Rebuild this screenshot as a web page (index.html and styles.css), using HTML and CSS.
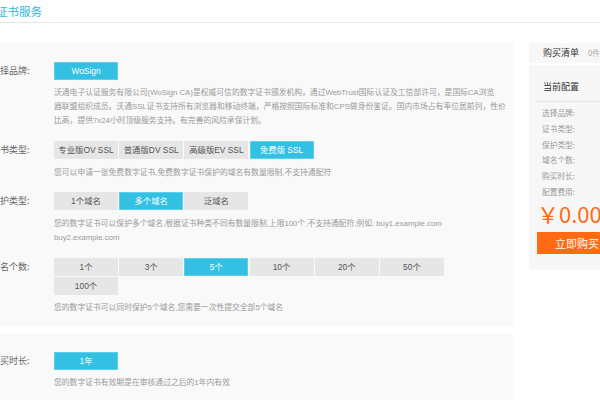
FILE: index.html
```html
<!DOCTYPE html>
<html lang="zh-CN">
<head>
<meta charset="utf-8">
<title>证书服务</title>
<link rel="stylesheet" href="styles.css">
</head>
<body>
<div class="page">
  <header class="top"><h1 class="title">证书服务</h1></header>
  <div class="main">
    <div class="content">
      <section class="panel">
        <div class="row">
          <div class="label">选择品牌:</div>
          <div class="field">
            <div class="opts"><span class="opt on">WoSign</span></div>
            <p class="desc">沃通电子认证服务有限公司(WoSign CA)是权威可信的数字证书颁发机构，通过WebTrust国际认证及工信部许可，是国际CA浏览<br>器联盟组织成员。沃通SSL证书支持所有浏览器和移动终端，严格按照国际标准和CPS做身份鉴证。国内市场占有率位居前列，性价<br>比高，提供7x24小时顶级服务支持。有完善的风险承保计划。</p>
          </div>
        </div>
        <div class="row">
          <div class="label">证书类型:</div>
          <div class="field">
            <div class="opts">
              <span class="opt">专业版OV SSL</span>
              <span class="opt">普通版DV SSL</span>
              <span class="opt">高级版EV SSL</span>
              <span class="opt on">免费版 SSL</span>
            </div>
            <p class="desc">您可以申请一张免费数字证书,免费数字证书保护的域名有数量限制,不支持通配符</p>
          </div>
        </div>
        <div class="row">
          <div class="label">保护类型:</div>
          <div class="field">
            <div class="opts">
              <span class="opt">1个域名</span>
              <span class="opt on">多个域名</span>
              <span class="opt">泛域名</span>
            </div>
            <p class="desc">您的数字证书可以保护多个域名,根据证书种类不同有数量限制,上限100个,不支持通配符,例如: buy1.example.com<br>buy2.example.com</p>
          </div>
        </div>
        <div class="row last">
          <div class="label">域名个数:</div>
          <div class="field">
            <div class="opts">
              <span class="opt">1个</span>
              <span class="opt">3个</span>
              <span class="opt on">5个</span>
              <span class="opt">10个</span>
              <span class="opt">20个</span>
              <span class="opt">50个</span>
              <span class="opt">100个</span>
            </div>
            <p class="desc">您的数字证书可以同时保护5个域名,您需要一次性提交全部5个域名</p>
          </div>
        </div>
      </section>
      <section class="panel tall">
        <div class="row">
          <div class="label">购买时长:</div>
          <div class="field">
            <div class="opts"><span class="opt on">1年</span></div>
            <p class="desc">您的数字证书有效期是在审核通过之后的1年内有效</p>
          </div>
        </div>
      </section>
    </div>
    <aside class="side">
      <div class="cart">购买清单<span class="count">0件</span></div>
      <div class="conf">
        <div class="conf-head">当前配置</div>
        <ul class="items">
          <li>选择品牌:</li>
          <li>证书类型:</li>
          <li>保护类型:</li>
          <li>域名个数:</li>
          <li>购买时长:</li>
          <li>配置费用:</li>
        </ul>
        <div class="price">￥0.00</div>
        <div class="buy">立即购买</div>
      </div>
    </aside>
  </div>
</div>
</body>
</html>
```
FILE: styles.css
```css
html, body {
  margin: 0;
  padding: 0;
  overflow: hidden;
  background: #fff;
}
body {
  font-family: "Liberation Sans", "Noto Sans CJK SC", sans-serif;
  color: #333;
}
.page {
  margin-left: -40px;
  width: 700px;
}
.top {
  height: 22px;
  border-bottom: 1px solid #e8e8e8;
  padding-left: 36px;
}
.title {
  margin: 0;
  font-size: 11.5px;
  line-height: 22px;
  font-weight: normal;
  color: #33b3dd;
  font-family: "Noto Sans CJK SC", sans-serif;
}
.main {
  display: flex;
  margin-top: 20px;
  gap: 16px;
}
.content {
  width: 553px;
  flex: none;
}
.panel {
  background: #f9f9f9;
  padding: 19px 0 0 31px;
}
.panel.tall {
  margin-top: 7px;
  height: 120px;
}
.row {
  display: flex;
  margin-bottom: 12.8px;
}
.row.last {
  margin-bottom: 0;
  padding-bottom: 11px;
}
.label {
  width: 63px;
  flex: none;
  font-size: 9px;
  line-height: 18px;
  color: #666;
  font-family: "Noto Sans CJK SC", sans-serif;
}
.field {
  flex: 1;
}
.opts {
  display: flex;
  flex-wrap: wrap;
  gap: 1px 1.2px;
  width: 395px;
}
.opt {
  width: 64px;
  height: 18px;
  line-height: 18px;
  text-align: center;
  font-size: 8.4px;
  background: #e6e6e6;
  color: #555;
}
.opt.on {
  background: #33c0e3;
  color: #fff;
  box-shadow: inset 0 0 0 1px #5fd0ec;
}
.desc {
  margin: 6.4px 0 0;
  font-size: 7.8px;
  line-height: 14px;
  color: #999;
  white-space: nowrap;
}
.side {
  width: 110px;
  flex: none;
}
.cart {
  height: 20px;
  line-height: 20px;
  background: #f7f7f7;
  padding-left: 14px;
  font-size: 9px;
  color: #333;
  font-family: "Noto Sans CJK SC", sans-serif;
}
.count {
  margin-left: 9px;
  font-size: 7.7px;
  color: #aaa;
}
.conf {
  margin-top: 2px;
  background: #f7f7f7;
  padding: 0 7px 16px 8px;
  font-family: "Noto Sans CJK SC", sans-serif;
}
.conf-head {
  padding: 15px 0 7px 6px;
  line-height: 14px;
  font-size: 9px;
  color: #333;
  border-bottom: 1px solid #e6e6e6;
}
.items {
  list-style: none;
  margin: 3px 0 0;
  padding: 0 0 0 5px;
}
.items li {
  font-size: 7.7px;
  line-height: 15.8px;
  color: #999;
}
.price {
  font-size: 22px;
  line-height: 26px;
  color: #ff6a13;
  font-family: "Noto Sans CJK SC", sans-serif;
}
.buy {
  margin-top: 6px;
  width: 80px;
  height: 22px;
  line-height: 22px;
  background: #ff6a13;
  color: #fff;
  text-align: center;
  font-size: 11px;
}
```
